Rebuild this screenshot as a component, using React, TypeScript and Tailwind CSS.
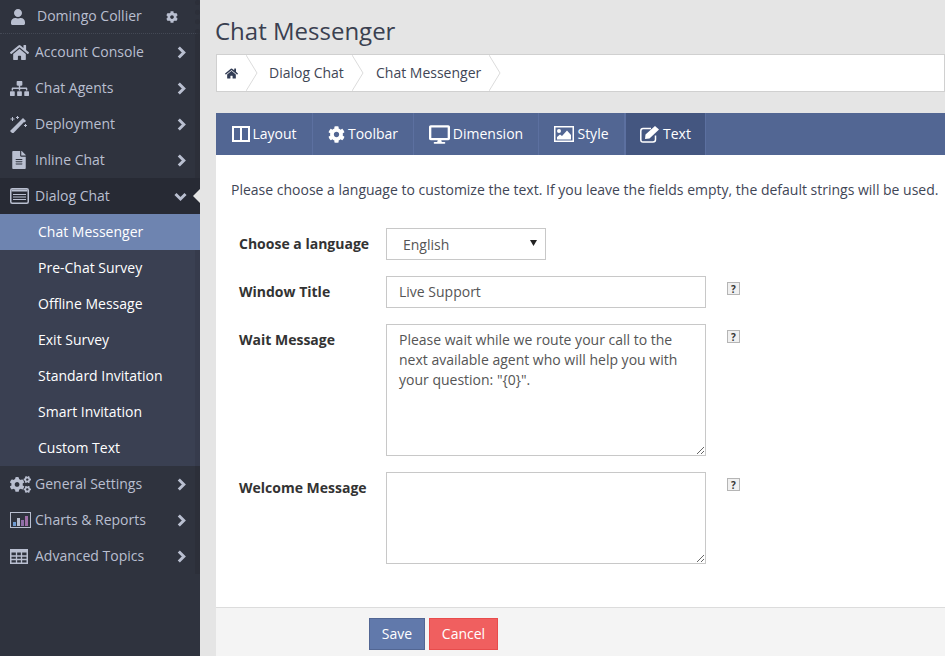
import React from "react";
import { FaUser, FaCog, FaHome, FaSitemap, FaFileAlt, FaCogs, FaDesktop } from "react-icons/fa";

function ChartIcon() {
  return (
    <svg width="21" height="16" viewBox="0 0 21 16" className="shrink-0">
      <rect x="0.5" y="0.5" width="20" height="15" fill="none" stroke="#b9bfd0" strokeWidth="1" />
      <rect x="3" y="10" width="3" height="4" fill="#6f9ad0" />
      <rect x="7" y="6" width="3" height="8" fill="#b9bfd0" />
      <rect x="11" y="8" width="3" height="6" fill="#8f6fa8" />
      <rect x="15" y="4" width="3" height="10" fill="#a06fa8" />
    </svg>
  );
}
function ChevronRight() {
  return (
    <svg width="9" height="13" viewBox="0 0 9 13" className="mr-[9px] shrink-0">
      <path d="M1.8 1.5 L6.8 6.5 L1.8 11.5" fill="none" stroke="currentColor" strokeWidth="3" />
    </svg>
  );
}
function ChevronDown() {
  return (
    <svg width="13" height="10" viewBox="0 0 13 10" className="mr-[13px] mt-[2px] shrink-0">
      <path d="M1.5 2 L6.5 7 L11.5 2" fill="none" stroke="currentColor" strokeWidth="3" />
    </svg>
  );
}
function WandIcon() {
  return (
    <svg width="17" height="17" viewBox="0 0 17 17" className="shrink-0" fill="currentColor">
      <path d="M2 17 L0 15 L11.5 3.5 L15 5 L3.5 17 Z" />
      <path d="M11.5 3.5 L13 2 L16 5 L14.5 6.5 Z" />
      <rect x="2" y="1" width="1" height="4" />
      <rect x="0.5" y="2.5" width="4" height="1" />
      <rect x="7" y="0" width="1" height="3" />
      <rect x="6" y="1" width="3" height="1" />
      <rect x="15" y="8" width="1" height="3" />
      <rect x="14" y="9" width="3" height="1" />
    </svg>
  );
}
function ListAltIcon() {
  return (
    <svg width="19" height="16" viewBox="0 0 19 16" className="shrink-0">
      <rect x="0.75" y="0.75" width="17.5" height="14.5" rx="1.5" fill="none" stroke="currentColor" strokeWidth="1.5" />
      <rect x="1.5" y="1.5" width="16" height="2" fill="currentColor" />
      <path d="M3 6.5 H16 M3 9 H16 M3 11.5 H16" stroke="currentColor" strokeWidth="1.2" />
    </svg>
  );
}
function TableIcon() {
  return (
    <svg width="18" height="15" viewBox="0 0 18 15" className="shrink-0">
      <rect x="0.75" y="0.75" width="16.5" height="13.5" fill="none" stroke="currentColor" strokeWidth="1.5" />
      <rect x="0.5" y="0.5" width="17" height="3" fill="currentColor" />
      <path d="M6.5 1 V14 M11.5 1 V14 M1 7 H17 M1 10.5 H17" stroke="currentColor" strokeWidth="1.3" fill="none" />
    </svg>
  );
}
function ColumnsIcon() {
  return (
    <svg width="18" height="16" viewBox="0 0 18 16" className="ml-px -mr-px shrink-0">
      <rect x="1" y="1" width="16" height="14" fill="none" stroke="currentColor" strokeWidth="2" />
      <path d="M9 1 V15" stroke="currentColor" strokeWidth="2" />
    </svg>
  );
}
function ImageIcon() {
  return (
    <svg width="20" height="16" viewBox="0 0 20 16" className="shrink-0" fill="currentColor">
      <rect x="0.75" y="0.75" width="18.5" height="14.5" fill="none" stroke="currentColor" strokeWidth="1.5" />
      <circle cx="5" cy="5" r="2" />
      <path d="M3 13.5 V11 L6 8.5 L8 10 L13 4.5 L17 9 V13.5 Z" />
    </svg>
  );
}
function EditIcon() {
  return (
    <svg width="20" height="17" viewBox="0 0 20 17" className="shrink-0">
      <path d="M15.5 9.5 V13.5 Q15.5 16 13 16 H3 Q0.8 16 0.8 13.5 V5 Q0.8 2.5 3 2.5 H11" fill="none" stroke="currentColor" strokeWidth="1.5" />
      <path d="M5.5 8.5 L15 0 L19 3.5 L9.5 12.5 L5 13 Z" fill="currentColor" />
    </svg>
  );
}

const topItems = [
  { label: "Account Console", icon: <FaHome size={19} /> },
  { label: "Chat Agents", icon: <FaSitemap size={19} /> },
  { label: "Deployment", icon: <WandIcon /> },
  { label: "Inline Chat", icon: <FaFileAlt size={18} /> },
];
const subItems = ["Chat Messenger", "Pre-Chat Survey", "Offline Message", "Exit Survey", "Standard Invitation", "Smart Invitation", "Custom Text"];
const bottomItems = [
  { label: "General Settings", icon: <FaCogs size={21} /> },
  { label: "Charts & Reports", icon: <ChartIcon /> },
  { label: "Advanced Topics", icon: <TableIcon /> },
];
const tabs = [
  { label: "Layout", icon: <ColumnsIcon />, w: "w-[97px]" },
  { label: "Toolbar", icon: <FaCog size={17} />, w: "w-[101px]" },
  { label: "Dimension", icon: <FaDesktop size={21} />, w: "w-[125px]" },
  { label: "Style", icon: <ImageIcon />, w: "w-[86px]" },
  { label: "Text", icon: <EditIcon />, w: "w-[81px]", active: true },
];

function MenuItem({ label, icon }: { label: string; icon: React.ReactNode }) {
  return (
    <div className="flex h-9 items-center border-r-[5px] border-[#2c2f39] text-[14px] text-[#b9bfd0]">
      <span className="flex w-[35px] shrink-0 items-center pl-[10px]">{icon}</span>
      <span className="mb-[2px] flex-1">{label}</span>
      <ChevronRight />
    </div>
  );
}

function Help() {
  return (
    <span className="flex h-[13px] w-[13px] items-center justify-center border border-[#b5b5b5] bg-[#f0f0f0] text-[10px] font-bold leading-none text-[#333]">?</span>
  );
}

function Row({ label, className, children, help }: { label: string; className: string; children: React.ReactNode; help?: boolean }) {
  return (
    <div className={`flex ${className}`}>
      <div className="w-[170px] shrink-0 pl-[23px] text-[14px] font-bold leading-[32px] text-[#333]">{label}</div>
      {children}
      {help && <div className="ml-[21px] pt-[6px]"><Help /></div>}
    </div>
  );
}

function Crumb({ className, children }: { className: string; children?: React.ReactNode }) {
  return (
    <span className={`relative flex h-full items-center pb-[2px] ${className}`}>
      <svg width="12" height="36" viewBox="0 0 12 36" className="absolute -left-[11px] top-0">
        <path d="M0 0 L11 18 L0 36" fill="none" stroke="#dcdcdc" />
      </svg>
      {children}
    </span>
  );
}

export default function App() {
  return (
    <div className="flex h-screen w-[945px] overflow-hidden bg-[#e5e5e5] font-['Open_Sans',sans-serif]">
      <aside className="w-[200px] shrink-0 bg-[#2f333e]">
        <div className="flex h-[34px] items-center border-b border-r-[5px] border-dotted border-b-[#444955] border-r-[#2c2f39] text-[14px] text-[#b9bfd0]">
          <span className="flex w-[37px] shrink-0 pl-[10px]"><FaUser size={16} /></span>
          <span className="mb-[2px] flex-1">Domingo Collier</span>
          <FaCog size={12} className="mr-[17px]" />
        </div>
        {topItems.map((i) => <MenuItem key={i.label} {...i} />)}
        <div className="relative flex h-9 items-center bg-[#272a34] text-[14px] text-[#b9bfd0]">
          <span className="flex w-[35px] shrink-0 pl-[10px]"><ListAltIcon /></span>
          <span className="mb-[2px] flex-1">Dialog Chat</span>
          <ChevronDown />
          <span className="absolute right-0 top-[11px] h-0 w-0 border-y-[7px] border-r-[7px] border-y-transparent border-r-[#e5e5e5]" />
        </div>
        {subItems.map((s, i) => (
          <div key={s} className={`flex h-9 items-center pb-[2px] pl-[38px] text-[14px] text-white ${i === 0 ? "bg-[#6e84b0]" : "border-r-[5px] border-[#363b4c] bg-[#3a4052]"}`}>{s}</div>
        ))}
        {bottomItems.map((i) => <MenuItem key={i.label} {...i} />)}
      </aside>
      <main className="flex min-w-0 flex-1 flex-col pl-4">
        <h1 className="-ml-px h-[54px] pt-[11px] text-[24px] leading-[40px] text-[#3a4050]">Chat Messenger</h1>
        <nav className="flex h-[38px] items-center overflow-hidden border border-[#d0d0d0] bg-white text-[14px] text-[#3f4656]">
          <span className="flex h-full w-[40px] items-center pl-2 text-[#333d55]">
            <FaHome size={13} />
          </span>
          <Crumb className="w-[106px] pl-[12px]">Dialog Chat</Crumb>
          <Crumb className="w-[137px] pl-[13px]">Chat Messenger</Crumb>
          <Crumb className="w-[20px]" />
        </nav>
        <div className="mt-[21px] flex h-[42px] bg-[#526693] text-[14px] text-white">
          {tabs.map((t) => (
            <div key={t.label} className={`flex items-center justify-center gap-[3px] border-r border-[#5c70a0] ${t.w} ${t.active ? "border-l bg-[#445680]" : ""}`}>
              {t.icon}
              <span className="mb-[2px]">{t.label}</span>
            </div>
          ))}
        </div>
        <div className="flex flex-1 flex-col bg-white">
          <p className="whitespace-nowrap pl-[15px] pt-[25px] text-[14px] leading-[20px] text-[#3f4656]">Please choose a language to customize the text. If you leave the fields empty, the default strings will be used.</p>
          <Row label="Choose a language" className="mt-[28px]">
            <div className="relative flex h-[32px] w-[160px] items-center border border-[#c8c8c8] pl-4 text-[14px] text-[#555]">
              English
              <svg width="7" height="6" viewBox="0 0 7 6" className="absolute right-[8px] top-[11px]">
                <path d="M0 0 H7 L3.5 6 Z" fill="#222" />
              </svg>
            </div>
          </Row>
          <Row label="Window Title" className="mt-[16px]" help>
            <div className="flex h-[32px] w-[320px] items-center border border-[#c8c8c8] pb-[2px] pl-3 text-[14px] text-[#555]">Live Support</div>
          </Row>
          <Row label="Wait Message" className="mt-[16px]" help>
            <textarea readOnly className="h-[132px] w-[320px] border border-[#c8c8c8] px-3 py-[5px] text-[14px] leading-[20px] text-[#555]" value={'Please wait while we route your call to the next available agent who will help you with your question: "{0}".'} />
          </Row>
          <Row label="Welcome Message" className="mt-[16px]" help>
            <textarea readOnly className="h-[92px] w-[320px] border border-[#c8c8c8] px-3 py-[5px] text-[14px]" value="" />
          </Row>
          <div className="mt-[43px] flex flex-1 gap-1 border-t border-[#dcdcdc] bg-[#f4f4f4] pl-[153px] pt-[10px]">
            <div className="flex h-8 w-[56px] items-center justify-center border border-[#526693] bg-[#6179ab] pb-[2px] text-[14px] text-white">Save</div>
            <div className="flex h-8 w-[69px] items-center justify-center border border-[#e84c4c] bg-[#f05f5f] pb-[2px] text-[14px] text-white">Cancel</div>
          </div>
        </div>
      </main>
    </div>
  );
}
